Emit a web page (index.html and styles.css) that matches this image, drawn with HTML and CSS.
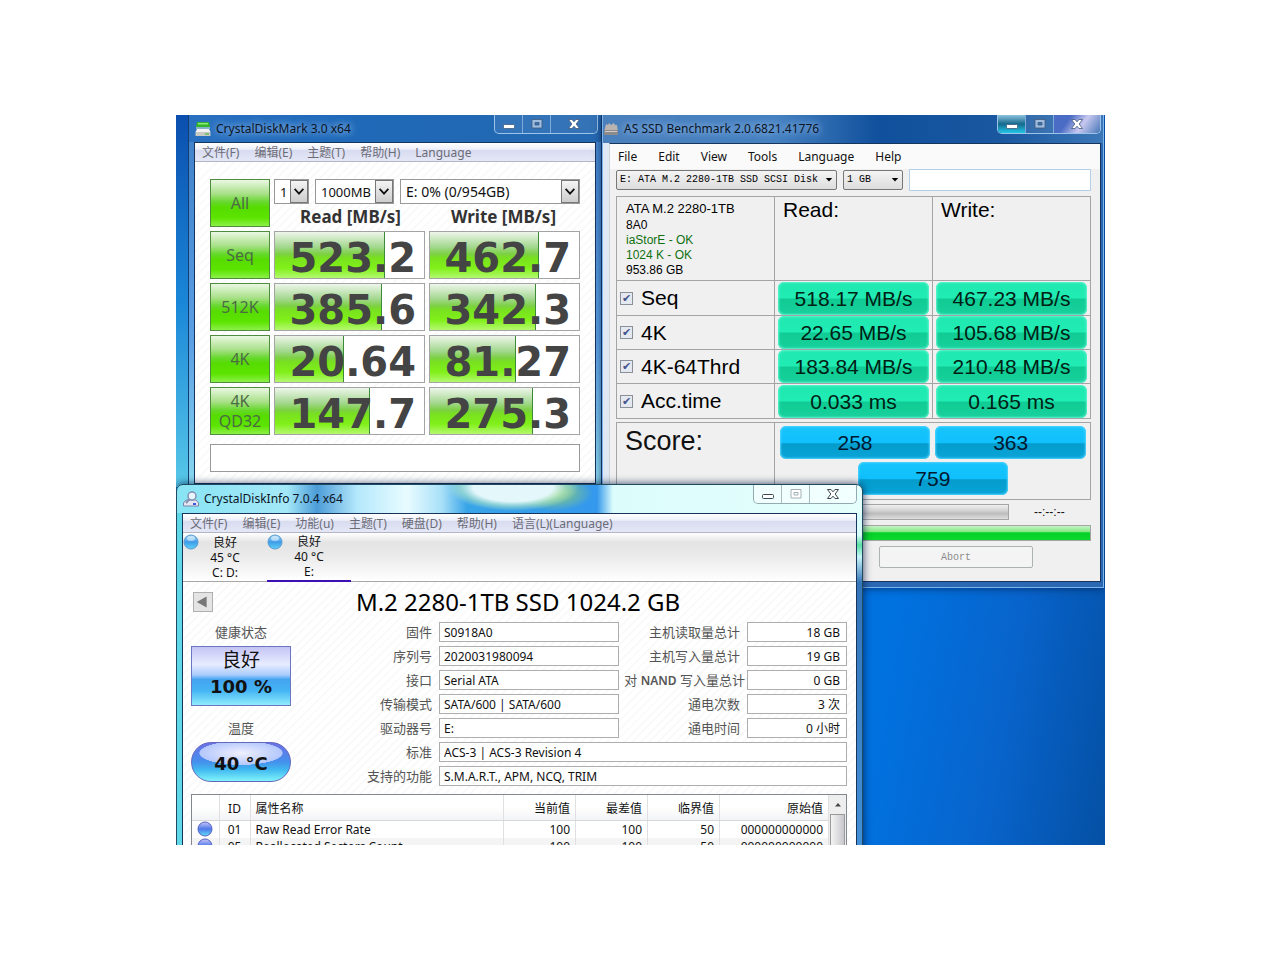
FILE: index.html
```html
<!DOCTYPE html>
<html lang="zh-CN">
<head>
<meta charset="utf-8">
<title>Disk benchmarks</title>
<link rel="stylesheet" href="styles.css">
</head>
<body>
<svg class="defs" aria-hidden="true">
  <defs>
    <linearGradient id="orb" x1="0" y1="0" x2="0" y2="1"><stop offset="0" stop-color="#a9dcf8"/><stop offset=".5" stop-color="#3f9be8"/><stop offset="1" stop-color="#5fd3f8"/></linearGradient>
    <linearGradient id="orbv" x1="0" y1="0" x2="0" y2="1"><stop offset="0" stop-color="#c9c6f8"/><stop offset=".5" stop-color="#4f78e8"/><stop offset="1" stop-color="#5fe0fb"/></linearGradient>
    <symbol id="min" viewBox="0 0 14 12"><rect x="1.500" y="6.500" width="11" height="4" rx="1"/></symbol>
    <symbol id="max" viewBox="0 0 14 12"><path fill-rule="evenodd" d="M2 1.500h10v8.500H2zM5 4.500v2.500h4V4.500z"/></symbol>
    <symbol id="close" viewBox="0 0 14 12"><path d="M1.500 1.500h3.500l2 2.300 2-2.300h3.500L9.200 6l3.300 4.500H9L7 8.200l-2 2.300H1.500L4.800 6z"/></symbol>
    <symbol id="chev" viewBox="0 0 18 24"><path d="M4 9l5 5.500L14 9" fill="none" stroke="#111" stroke-width="2"/></symbol>
    <symbol id="tri" viewBox="0 0 10 6"><path d="M1 1h8L5 5.500z"/></symbol>
  </defs>
</svg>
<main class="desktop">

  <section class="window mark">
    <header class="titlebar">
      <svg class="app-icon" viewBox="0 0 16 16"><path d="M2 1h12l1 5H1z" fill="#35b52c"/><path d="M3 2h10v1.500H3z" fill="#8be67d"/><path d="M2 8h12l1.500 3H.5z" fill="#f2f2f2"/><path d="M.5 11h15v4H.5z" fill="#c9c9c4"/><path d="M10 12.500h4v1h-4z" fill="#2fb52c"/><path d="M1 7h14" stroke="#dff5d9"/></svg>
      <h1 class="title">CrystalDiskMark 3.0 x64</h1>
      <div class="caption">
        <button aria-label="Minimize"><svg><use href="#min"/></svg></button>
        <button class="dim" aria-label="Maximize"><svg><use href="#max"/></svg></button>
        <button class="wide" aria-label="Close"><svg><use href="#close"/></svg></button>
      </div>
    </header>
    <div class="client hatch">
      <nav class="menu crystal-menu"><span>文件(F)</span><span>编辑(E)</span><span>主题(T)</span><span>帮助(H)</span><span>Language</span></nav>
      <div class="mark-body">
        <div class="mark-top">
          <button class="run">All</button>
          <div class="mark-head">
            <div class="combos">
              <span class="combo c-count"><select aria-label="Test count"><option>1</option></select><svg><use href="#chev"/></svg></span>
              <span class="combo c-size"><select aria-label="Test size"><option>1000MB</option></select><svg><use href="#chev"/></svg></span>
              <span class="combo c-drive"><select aria-label="Drive"><option>E: 0% (0/954GB)</option></select><svg><use href="#chev"/></svg></span>
            </div>
            <div class="heads"><span>Read [MB/s]</span><span>Write [MB/s]</span></div>
          </div>
        </div>
        <div class="mark-row"><button class="run">Seq</button><div class="score"><i style="width:74%"></i><b>523.2</b></div><div class="score"><i style="width:73%"></i><b>462.7</b></div></div>
        <div class="mark-row"><button class="run">512K</button><div class="score"><i style="width:72%"></i><b>385.6</b></div><div class="score"><i style="width:71%"></i><b>342.3</b></div></div>
        <div class="mark-row"><button class="run">4K</button><div class="score"><i style="width:46%"></i><b>20.64</b></div><div class="score"><i style="width:58%"></i><b>81.27</b></div></div>
        <div class="mark-row"><button class="run">4K<br>QD32</button><div class="score"><i style="width:64%"></i><b>147.7</b></div><div class="score"><i style="width:69%"></i><b>275.3</b></div></div>
        <input class="comment" type="text" aria-label="Comment">
      </div>
    </div>
  </section>

  <section class="window ssd">
    <header class="titlebar">
      <svg class="app-icon" viewBox="0 0 16 16"><path d="M3 3l2 1 1-2 2 2 3-2 1 2 2 0 1 7H1z" fill="#b9b4b0"/><path d="M1 9h14v5H1z" fill="#8d8a8a"/><path d="M2 10h12v1H2z" fill="#d0cccc"/></svg>
      <h1 class="title">AS SSD Benchmark 2.0.6821.41776</h1>
      <div class="caption">
        <button class="hot" aria-label="Minimize"><svg><use href="#min"/></svg></button>
        <button class="dim" aria-label="Maximize"><svg><use href="#max"/></svg></button>
        <button class="wide shine" aria-label="Close"><svg><use href="#close"/></svg></button>
      </div>
    </header>
    <div class="client">
      <nav class="menu ssd-menu"><span>File</span><span>Edit</span><span>View</span><span>Tools</span><span>Language</span><span>Help</span></nav>
      <div class="ssd-body">
        <div class="ssd-bar">
          <span class="drop d-drive"><select aria-label="Disk"><option>E: ATA M.2 2280-1TB SSD SCSI Disk</option></select><svg><use href="#tri"/></svg></span>
          <span class="drop d-size"><select aria-label="Size"><option>1 GB</option></select><svg><use href="#tri"/></svg></span>
          <input class="ssd-text" type="text" aria-label="Note">
        </div>
        <table class="results">
          <tr class="first"><td class="info"><p class="model">ATA M.2 2280-1TB</p><p>8A0</p><p class="ok">iaStorE - OK</p><p class="ok">1024 K - OK</p><p>953.86 GB</p></td><th>Read:</th><th>Write:</th></tr>
          <tr class="tall"><td><label><input type="checkbox" checked>Seq</label></td><td><output>518.17 MB/s</output></td><td><output>467.23 MB/s</output></td></tr>
          <tr><td><label><input type="checkbox" checked>4K</label></td><td><output>22.65 MB/s</output></td><td><output>105.68 MB/s</output></td></tr>
          <tr><td><label><input type="checkbox" checked>4K-64Thrd</label></td><td><output>183.84 MB/s</output></td><td><output>210.48 MB/s</output></td></tr>
          <tr class="tall"><td><label><input type="checkbox" checked>Acc.time</label></td><td><output>0.033 ms</output></td><td><output>0.165 ms</output></td></tr>
        </table>
        <div class="total">
          <div class="total-name">Score:</div>
          <div class="total-values"><output>258</output><output>363</output><output class="sum">759</output></div>
        </div>
        <div class="timing"><div class="bar gray"></div><span>--:--:--</span></div>
        <div class="bar green"></div>
        <button class="abort" disabled>Abort</button>
      </div>
    </div>
  </section>

  <section class="window info-window">
    <header class="titlebar">
      <svg class="app-icon" viewBox="0 0 16 16"><path d="M3 9h10l2.500 3v3H.5v-3z" fill="#e4e7f2" stroke="#7d86a8"/><circle cx="9" cy="5" r="4" fill="#e9f6ff" stroke="#8292b0" stroke-width="1.500"/><path d="M6.500 8L3 12" stroke="#8292b0" stroke-width="2"/><path d="M10 13h3" stroke="#4358e0" stroke-width="2"/></svg>
      <h1 class="title">CrystalDiskInfo 7.0.4 x64</h1>
      <div class="caption light">
        <button aria-label="Minimize"><svg><use href="#min"/></svg></button>
        <button class="dim" aria-label="Maximize"><svg><use href="#max"/></svg></button>
        <button class="wide" aria-label="Close"><svg><use href="#close"/></svg></button>
      </div>
    </header>
    <div class="client hatch">
      <nav class="menu crystal-menu"><span>文件(F)</span><span>编辑(E)</span><span>功能(u)</span><span>主题(T)</span><span>硬盘(D)</span><span>帮助(H)</span><span>语言(L)(Language)</span></nav>
      <div class="disks">
        <button class="disk"><svg viewBox="0 0 16 16"><circle cx="8" cy="8" r="7" fill="url(#orb)" stroke="#5a9ad0"/><ellipse cx="8" cy="4.500" rx="4" ry="2.500" fill="#fff" opacity=".5"/></svg><span>良好<br>45 °C<br>C: D:</span></button>
        <button class="disk on"><svg viewBox="0 0 16 16"><circle cx="8" cy="8" r="7" fill="url(#orb)" stroke="#5a9ad0"/><ellipse cx="8" cy="4.500" rx="4" ry="2.500" fill="#fff" opacity=".5"/></svg><span>良好<br>40 °C<br>E:</span></button>
      </div>
      <div class="info-body">
        <div class="model-row"><button class="prev" aria-label="Previous disk"><svg viewBox="0 0 20 20"><path d="M14 4v12L3 10z" fill="#777"/></svg></button><h2>M.2 2280-1TB SSD 1024.2 GB</h2></div>
        <div class="details">
          <div class="status">
            <span class="cap">健康状态</span>
            <button class="health"><span>良好</span><b>100 %</b></button>
            <span class="cap">温度</span>
            <button class="temp">40 °C</button>
          </div>
          <div class="fields">
            <label for="fw">固件</label><input id="fw" value="S0918A0" readonly><label for="rd">主机读取量总计</label><input id="rd" class="num" value="18 GB" readonly>
            <label for="sn">序列号</label><input id="sn" value="2020031980094" readonly><label for="wr">主机写入量总计</label><input id="wr" class="num" value="19 GB" readonly>
            <label for="if">接口</label><input id="if" value="Serial ATA" readonly><label for="nd" class="nand">对 <b>NAND</b> 写入量总计</label><input id="nd" class="num" value="0 GB" readonly>
            <label for="tm">传输模式</label><input id="tm" value="SATA/600 | SATA/600" readonly><label for="pc">通电次数</label><input id="pc" class="num" value="3 次" readonly>
            <label for="dl">驱动器号</label><input id="dl" value="E:" readonly><label for="ph">通电时间</label><input id="ph" class="num" value="0 小时" readonly>
            <label for="st">标准</label><input id="st" class="span" value="ACS-3 | ACS-3 Revision 4" readonly>
            <label for="ft">支持的功能</label><input id="ft" class="span" value="S.M.A.R.T., APM, NCQ, TRIM" readonly>
          </div>
        </div>
        <div class="list">
          <table class="smart">
            <colgroup><col class="k-icon"><col class="k-id"><col><col class="k-val"><col class="k-val"><col class="k-val"><col class="k-raw"></colgroup>
            <thead><tr><th></th><th class="id">ID</th><th class="name">属性名称</th><th>当前值</th><th>最差值</th><th>临界值</th><th>原始值</th></tr></thead>
            <tbody>
              <tr><td class="dot"><svg viewBox="0 0 16 16"><circle cx="8" cy="8" r="7" fill="url(#orbv)" stroke="#5560c0"/></svg></td><td class="id">01</td><td class="name">Raw Read Error Rate</td><td>100</td><td>100</td><td>50</td><td>000000000000</td></tr>
              <tr><td class="dot"><svg viewBox="0 0 16 16"><circle cx="8" cy="8" r="7" fill="url(#orbv)" stroke="#5560c0"/></svg></td><td class="id">05</td><td class="name">Reallocated Sectors Count</td><td>100</td><td>100</td><td>50</td><td>000000000000</td></tr>
            </tbody>
          </table>
          <div class="scroll"><svg viewBox="0 0 10 6"><path d="M2 5h6L5 1.500z" fill="#444"/></svg><i></i></div>
        </div>
      </div>
    </div>
  </section>
</main>
</body>
</html>
```

FILE: styles.css
```css
* { box-sizing: border-box; }
body {
  margin: 0;
  min-height: 100vh;
  padding: 115px 175px 115px 176px;
  background: #fff;
  font-family: "Noto Sans", "Noto Sans CJK SC", sans-serif;
  font-size: 12px;
  color: #111;
}
button, input, select { font: inherit; color: inherit; margin: 0; padding: 0; border-radius: 0; }
h1, h2, p { margin: 0; font-weight: normal; }
.defs { position: absolute; width: 0; height: 0; }

.desktop {
  position: relative;
  overflow: hidden;
  height: calc(100vh - 230px);
  min-height: 730px;
  background:
    linear-gradient(180deg, #0b4fae, #1a86d8 50%, #58c8e8) left top / 14px 372px no-repeat,
    linear-gradient(100deg, #0070e0 70%, #0072e0 76%, #0864cc 88%, #0450a4);
}
.window { position: absolute; display: flex; flex-direction: column; }
.titlebar { display: flex; align-items: center; gap: 5px; }
.app-icon { width: 16px; height: 16px; flex: none; }
.title { flex: 1; font-size: 12px; line-height: 16px; color: #0b1526; white-space: nowrap; }
.client { flex: 1; background-color: #fff; border: 1px solid #16345c; }
.hatch { background-image: repeating-linear-gradient(135deg, #fff 0 4px, #fafafa 4px 6px); }

.caption {
  display: flex;
  align-self: flex-start;
  height: 19px;
  border: 1px solid #9cc4ea;
  border-top: 0;
  border-radius: 0 0 5px 5px;
  overflow: hidden;
}
.caption button { width: 28px; border: 0; border-right: 1px solid #7fa9d6; background: rgba(255, 255, 255, .08); display: grid; place-items: center; }
.caption .wide { width: 46px; border-right: 0; }
.caption svg { width: 14px; height: 12px; fill: #fff; stroke: #40587c; stroke-width: .8; }
.caption .dim svg { fill: #9dbde0; }
.caption .hot { background: linear-gradient(#8cc4dc, #16688e 50%, #20c8e8); }
.caption .shine { background: linear-gradient(125deg, #4a6cc4 30%, #c8c8f0 60%, #4878b8); }
.light { border-color: #93aab0; }
.light button { border-color: #a9bcc0; background: rgba(255, 255, 255, .5); }
.light svg { stroke: #3c4650; stroke-width: 1; }
.light .dim svg { fill: #fff; stroke: #a8b0b4; }

.menu { display: flex; white-space: nowrap; }
.crystal-menu {
  gap: 15px;
  height: 19px;
  padding-left: 7px;
  line-height: 19px;
  color: #6c6c76;
  background: linear-gradient(#fff, #eef0fa 35%, #d8dcf0 40%, #e4e7f6);
  border-bottom: 1px solid #b4b6c4;
}

/* CrystalDiskMark */
.mark {
  left: 12px; top: 0; width: 414px; height: 372px;
  padding: 0 5px 3px;
  background:
    linear-gradient(90deg, #2a70c0, #1f69b8 40%, #2468b0) top / 100% 27px no-repeat,
    linear-gradient(#3f7fc8, #5a9ee4 60%, #8ad8f0);
  border: solid #143e70;
  border-width: 0 1px;
}
.mark .titlebar { height: 27px; padding-left: 1px; }
.mark .title, .ssd .title { text-shadow: 0 0 6px #8fb8e8, 0 0 8px #8fb8e8; }
.mark .caption { margin-right: -2px; }
.mark-body { display: flex; flex-direction: column; gap: 4px; padding: 17px 15px 0; }
.mark-top, .mark-row { display: grid; grid-template-columns: 60px 1fr; grid-template-rows: 48px; gap: 4px; }
.mark-row { grid-template-columns: 60px 1fr 1fr; }
.run {
  border: 1px solid #4f8c40;
  background: linear-gradient(#eaf8e2, #a8e088 30%, #66d82c 48%, #56dc00 60%, #5ce400 82%, #8cf048);
  color: #4b6b45;
  font-size: 16px;
  line-height: 20px;
}
.mark-head { display: flex; flex-direction: column; }
.combos { display: flex; gap: 6px; }
.combo { position: relative; height: 25px; }
.c-count { width: 35px; }
.c-size { width: 79px; }
.c-drive { flex: 1; }
.combo select { appearance: none; width: 100%; height: 100%; padding-left: 5px; border: 1px solid #999; background: #fff; font-size: 13px; }
.combo.c-drive select { font-size: 14px; }
.combo svg { position: absolute; right: 1px; top: 1px; width: 18px; height: 23px; border: 1px solid #777; background: linear-gradient(#f4f4f4, #cdcdcd); pointer-events: none; }
.heads { display: grid; grid-template-columns: 1fr 1fr; text-align: center; font-size: 17px; font-weight: bold; line-height: 26px; color: #333; }
.score { position: relative; overflow: hidden; border: 1px solid #a4a4a4; background: #fff; text-align: right; }
.score i { position: absolute; left: 0; top: 0; bottom: 0; border-right: 1px solid #3d8a38; background: linear-gradient(#eef6ea, #a4d890 32%, #7cd044 48%, #78e020 56%, #80f018 78%, #b4f870); }
.score b { position: relative; display: block; padding: 3px 8px 0 0; font: bold 40px/46px "DejaVu Sans", sans-serif; color: #444; }
.comment { width: 100%; height: 28px; margin-top: 5px; border: 1px solid #999; background: #fff; }

/* AS SSD Benchmark */
.ssd {
  left: 426px; top: 0; width: 502px; height: 473px;
  padding: 0 2px 5px 6px;
  background:
    linear-gradient(90deg, #4a80bc, #4580c0 35%, #10509c 55%, #1a58a0 80%, #3c78b8) top / 100% 28px no-repeat,
    linear-gradient(90deg, #dfe9f4 0 8px, #2a68b4 9px);
  border: 1px solid #7db4ec;
  border-top: 0;
  box-shadow: 0 0 8px rgba(0, 20, 60, .7);
}
.ssd .titlebar { height: 28px; margin-left: -6px; }
.ssd .client { background: #f0f0f0; border-left-color: #d0d4d8; }
.ssd-menu { gap: 21px; height: 25px; padding-left: 8px; line-height: 26px; background: #fafafa; }
.ssd-body { padding: 0 9px 0 6px; }
.ssd-bar { display: flex; gap: 6px; align-items: flex-start; height: 27px; }
.drop { position: relative; height: 20px; }
.d-drive { width: 221px; }
.d-size { width: 60px; }
.drop select { appearance: none; width: 100%; height: 100%; padding-left: 3px; border: 1px solid #777; border-radius: 2px; background: linear-gradient(#f4f4f4, #ddd); font: 10px "Liberation Mono", monospace; color: #000; }
.drop svg { position: absolute; right: 4px; top: 8px; width: 8px; height: 5px; pointer-events: none; }
.ssd-text { flex: 1; min-width: 0; height: 22px; border: 1px solid #b4cfe8; background: #fff; }
.results { width: 100%; border-collapse: collapse; table-layout: fixed; font: 21px/24px "Liberation Sans", sans-serif; color: #000; }
.results td, .results th { height: 34px; padding: 0 3px; border: 1px solid #a4a4a4; }
.results .tall td { height: 35px; }
.results th { padding: 1px 8px; font-weight: normal; text-align: left; vertical-align: top; }
.results .info { height: 84px; padding: 3px 9px 0; font-size: 12px; line-height: 15px; vertical-align: top; }
.info .model { font-size: 13px; line-height: 18px; }
.info .ok { color: #107010; }
.results label { display: flex; align-items: center; gap: 8px; }
.results label input {
  appearance: none; width: 13px; height: 13px; border: 1px solid #8a8f98;
  background: #e4e8f0; display: grid; place-items: center;
}
.results label input::before { content: "✔"; font: 11px/11px "DejaVu Sans", sans-serif; color: #44548c; }
output {
  display: block; height: 33px; border-radius: 6px; text-align: center; color: #002014;
  font: 21px/34px "Liberation Sans", sans-serif;
  background: linear-gradient(#20e8b0, #20ecb4 48%, #10cc94 52%, #18d09c);
  box-shadow: inset 0 0 2px 1px #60f4d0;
}
.total { display: grid; grid-template-columns: 1fr 2fr; margin-top: 3px; border: 1px solid #a4a4a4; height: 78px; }
.total-name { padding-left: 8px; font: 27px/36px "Liberation Sans", sans-serif; border-right: 1px solid #a4a4a4; }
.total-values { display: grid; grid-template-columns: 1fr 1fr; gap: 1px 5px; padding: 3px 4px 3px 5px; }
.total output { color: #001830; background: linear-gradient(#18c4fc, #10c0fc 50%, #049ccc 54%, #0aa4d8); box-shadow: inset 0 0 2px 1px #50d4ff; }
.total .sum { grid-column: 1 / 3; justify-self: center; width: 150px; }
.timing { display: flex; align-items: center; margin-top: 4px; gap: 25px; }
.timing span { width: 57px; font: 12px "Liberation Sans", sans-serif; }
.bar { height: 16px; border: 1px solid #a4a4a4; }
.gray { flex: 1; background: linear-gradient(#f0f0f0, #cfcfcf 45%, #bcbcbc 60%, #dedede); }
.green { margin-top: 5px; background: linear-gradient(#c4f4c4, #84e884 42%, #04d028 48%, #0cd82c); }
.abort { display: block; width: 154px; height: 22px; margin: 5px 58px 0 auto; border: 1px solid #adb2b5; border-radius: 2px; background: #f4f4f4; color: #8c8c8c; font: 10px "Liberation Mono", monospace; }

/* CrystalDiskInfo */
.info-window {
  left: 0; top: 369px; width: 687px; min-height: 400px;
  padding: 0 5px;
  border: 1px solid #1f4a60;
  border-radius: 7px 7px 0 0;
  background:
    radial-gradient(ellipse 66px 24px at 336px 2px, #e4f8fc 60%, rgba(180, 232, 200, .6) 80%, transparent) top / 100% 28px no-repeat,
    radial-gradient(ellipse 40px 18px at 376px 8px, #9cd468, transparent) top / 100% 28px no-repeat,
    linear-gradient(90deg, #88e4f4 0, #a4e8f8 110px, #4c9cd8 140px, #b4e8fc 180px, #e8fcff 230px, #a8e0f8 265px, #38a4e8 290px, #3498ec 420px, #dcfcfc 436px, #e4fffc) top / 100% 28px no-repeat,
    linear-gradient(#60d8e8, #60d8e8) left / 50% 100% no-repeat,
    linear-gradient(#d8fcfc 50px, #58e0a0 60px, #c8f4f8 72px, #3474b8 98px, #4494dc);
  box-shadow: 0 0 8px rgba(0, 20, 60, .8);
}
.info-window .titlebar { height: 28px; padding-left: 1px; }
.disks { display: flex; height: 49px; border-bottom: 1px solid #a8a8a8; background: linear-gradient(#fff, #e4e4e4 20%, #ebebeb 50%, #fff); }
.disk { position: relative; width: 84px; height: 49px; border: 0; background: none; line-height: 15px; }
.disk span { display: block; }
.disk svg { position: absolute; left: 0; top: 1px; width: 16px; height: 16px; }
.disk.on { border-bottom: 2px solid #3c10b4; }
.info-body { padding: 8px 9px 0 8px; }
.model-row { display: flex; align-items: center; height: 24px; padding-left: 2px; }
.prev { width: 20px; height: 20px; border: 1px solid #b0b0b0; background: #e4e4e4; }
.prev svg { display: block; width: 18px; height: 18px; }
.model-row h2 { flex: 1; padding-right: 24px; text-align: center; font-size: 24px; line-height: 24px; color: #000; }
.details { display: grid; grid-template-columns: 100px 1fr; margin-top: 8px; }
.status { display: flex; flex-direction: column; }
.cap { text-align: center; font-size: 13px; line-height: 20px; color: #555; }
.health { display: flex; flex-direction: column; align-items: center; height: 60px; margin: 4px 0 12px; border: 1px solid #6c74c4; background: linear-gradient(#c4c4f4, #e8ecff 30%, #a8ccfc 48%, #44a4f0 56%, #44b4f4 75%, #90ecfc); }
.health span { font-size: 19px; line-height: 27px; }
.health b, .temp { font: bold 18px/26px "DejaVu Sans", sans-serif; }
.temp { height: 40px; margin-top: 4px; padding-top: 4px; border: 1px solid #6468bc; border-radius: 20px; background: radial-gradient(ellipse 42px 12px at 50% 10px, #f0f0ff, #b4c8fc 98%, transparent), linear-gradient(#6c70e4, #4490ec 50%, #40b8f0 70%, #80f4fc); }
.fields { display: grid; grid-template-columns: 1fr 180px 128px 100px; grid-auto-rows: 20px; row-gap: 4px; }
.fields label { padding-right: 7px; text-align: right; font-size: 13px; line-height: 20px; color: #555; white-space: nowrap; }
.fields .nand { padding-right: 2px; }
.nand b { font-size: 12px; font-weight: 600; }
.fields input { min-width: 0; padding: 0 4px; border: 1px solid #adadad; background: #fff; }
.fields .num { padding-right: 6px; text-align: right; }
.fields .span { grid-column: 2 / 5; }
.list { display: flex; margin-top: 8px; border: 1px solid #828790; background: #fff; }
.smart { flex: 1; border-collapse: collapse; table-layout: fixed; width: 0; }
.smart th, .smart td { padding: 0 5px; border-right: 1px solid #e0e0e0; text-align: right; font-weight: normal; line-height: 17px; height: 17px; }
.smart th { height: 25px; border-bottom: 1px solid #d8d8d8; background: linear-gradient(#fff 50%, #f2f3f5); padding-top: 3px; }
.smart .id { text-align: center; }
.smart .name { text-align: left; }
.smart tbody tr:nth-child(2) td { background: #f4f4f4; }
.smart .dot svg { display: block; width: 16px; height: 16px; }
.k-icon { width: 27px; }
.k-id { width: 31px; }
.k-val { width: 72px; }
.k-raw { width: 109px; }
.scroll { width: 17px; display: flex; flex-direction: column; align-items: center; background: #eee; }
.scroll svg { width: 10px; height: 19px; }
.scroll i { flex: 1; width: 15px; border: 1px solid #999; background: linear-gradient(90deg, #f4f4f4, #c8c8cc); }
```
